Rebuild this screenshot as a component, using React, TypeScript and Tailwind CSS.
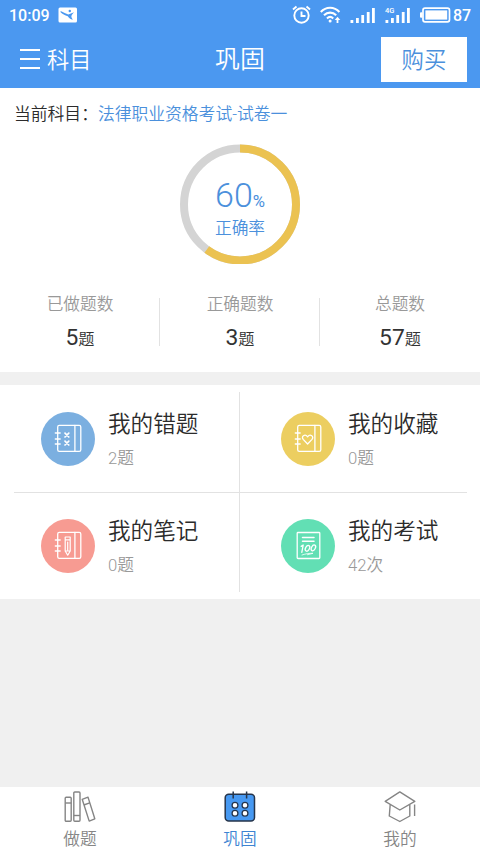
import React from 'react';

interface StatProps {
  label: string;
  value: number;
}

interface EntryProps {
  title: string;
  count: string;
  color: string;
  icon: React.ReactNode;
}

interface TabProps {
  label: string;
  active?: boolean;
  icon: React.ReactNode;
}

const SignalIcon: React.FC<{ tag?: string }> = ({ tag }) => (
  <svg className="w-[26px] h-[18px]" viewBox="0 0 26 18" fill="#fff">
    <rect x="0.5" y="14" width="2.8" height="3" />
    <rect x="6" y="12" width="2.8" height="5" />
    <rect x="11.3" y="9" width="2.8" height="8" />
    <rect x="16.8" y="6" width="2.8" height="11" />
    <rect x="22" y="2" width="2.8" height="15" />
    {tag && (
      <text x="0" y="7" fontSize="7.5" fontWeight="500" fontFamily="Roboto, sans-serif">
        {tag}
      </text>
    )}
  </svg>
);

const StatusBar: React.FC = () => (
  <div className="flex h-[30px] items-center text-white">
    <span className="ml-[9px] w-[41px] pt-px text-[16px] font-medium leading-[30px]">10:09</span>
    <svg className="ml-[8px] w-[20px] h-[16px]" viewBox="0 0 20 16">
      <rect x="0.5" y="0.5" width="18.5" height="15" rx="1.5" fill="#fff" />
      <path d="M2.6 4C5.5 5.4 8 6.8 10.3 7.4L16 5.2C13.6 7.6 13 9.2 13.6 10.6L14.8 12.8C12.4 12.2 11 11.2 9.8 9.2C7 8.4 4.2 6.8 2.6 5.2Z" fill="#4b98f0" />
      <circle cx="11.8" cy="4" r="1.2" fill="#4b98f0" />
    </svg>
    <svg className="ml-[214px] w-[20px] h-[20px]" viewBox="0 0 20 20" fill="none" stroke="#fff" strokeWidth="1.9">
      <circle cx="9.5" cy="10.5" r="7.2" />
      <path d="M9.5 6.5V11H13.5" />
      <path d="M1 4.5L4.5 1.5M14.5 1.5L18 4.5" />
    </svg>
    <svg className="ml-[8px] w-[22px] h-[18px]" viewBox="0 0 22 18" fill="none" stroke="#fff" strokeWidth="2.1">
      <path d="M0.8 6C6 0.3 14.2 0.3 19.4 6" />
      <path d="M4 9.3C7.5 5.7 12.7 5.7 16.2 9.3" />
      <path d="M7 12.5C9 10.5 11.2 10.5 13.2 12.5" />
      <circle cx="10.1" cy="15" r="1.5" fill="#fff" stroke="none" />
      <path d="M17.5 17V13.5" strokeWidth="1.8" />
      <path d="M14.7 14L17.5 10.7L20.3 14Z" fill="#fff" stroke="none" />
    </svg>
    <div className="ml-[8px] flex">
      <SignalIcon />
    </div>
    <div className="ml-[9px] flex">
      <SignalIcon tag="4G" />
    </div>
    <svg className="ml-[9px] w-[31px] h-[16px]" viewBox="0 0 31 16">
      <rect x="3" y="1.2" width="26.5" height="13.6" rx="2" fill="none" stroke="#fff" strokeWidth="1.7" />
      <rect x="5.4" y="3.4" width="21.8" height="9.2" fill="#fff" />
      <rect x="0" y="5.2" width="2.5" height="5.6" rx="1" fill="#fff" />
    </svg>
    <span className="ml-[2px] pt-px text-[16px] font-medium leading-[30px]">87</span>
  </div>
);

const Header: React.FC = () => (
  <header className="h-[88px] bg-[#4b98f0] text-white">
    <StatusBar />
    <div className="grid h-[58px] grid-cols-3 items-center">
      <div className="flex items-center pl-[20px]">
        <div className="mr-[7px] flex w-[20px] flex-col gap-[7px]">
          <span className="h-[2px] bg-white" />
          <span className="h-[2px] bg-white" />
          <span className="h-[2px] bg-white" />
        </div>
        <span className="pt-px text-[22.2px] font-[350] leading-[30px]">科目</span>
      </div>
      <h1 className="pt-[2px] text-center text-[25px] font-[350] leading-[34px]">巩固</h1>
      <div className="flex justify-end pr-[13px]">
        <button className="h-[45px] w-[86px] bg-white pt-[3px] text-[22.4px] font-[350] text-[#4b90dc]">购买</button>
      </div>
    </div>
  </header>
);

const RateRing: React.FC<{ rate: number }> = ({ rate }) => {
  const length = 2 * Math.PI * 56;
  return (
    <div className="relative mx-auto h-[120px] w-[120px] text-[#4b90dc]">
      <svg className="h-full w-full -rotate-90" viewBox="0 0 120 120" fill="none" strokeWidth="8">
        <circle cx="59.6" cy="60" r="56" stroke="#d4d4d4" />
        <circle cx="59.6" cy="60" r="56" stroke="#ebc251" strokeDasharray={`${(length * rate) / 100} ${length}`} />
      </svg>
      <div className="absolute inset-0 flex flex-col items-center">
        <div className="mt-[31px] flex h-[40px] items-baseline leading-[40px]">
          <span className="text-[34px] font-[350]">{rate}</span>
          <span className="text-[16.7px] font-normal">%</span>
        </div>
        <span className="mt-[2px] text-[16.7px] font-[350] leading-[24px]">正确率</span>
      </div>
    </div>
  );
};

const Stat: React.FC<StatProps> = ({ label, value }) => (
  <div className="flex flex-col items-center">
    <span className="pt-[2px] text-[16.7px] font-[350] leading-[24px] text-[#999]">{label}</span>
    <div className="mt-[5px] flex items-baseline leading-[32px] text-[#333]">
      <span className="text-[22.8px]">{value}</span>
      <span className="text-[16.2px] font-[350]">题</span>
    </div>
  </div>
);

const Notebook: React.FC<{ children: React.ReactNode }> = ({ children }) => (
  <svg className="h-[54px] w-[54px]" viewBox="0 0 54 54" fill="none" stroke="#fff" strokeWidth="1.3" strokeLinecap="round" strokeLinejoin="round">
    <rect x="16.7" y="13.3" width="23.1" height="26" rx="1.6" />
    <path d="M33.9 13.5V39.1M14.3 21H19.2M14.3 27H19.2M14.3 32H19.2" />
    {children}
  </svg>
);

const WrongIcon: React.FC = () => (
  <Notebook>
    <path d="M24 21.2L27.8 25M27.8 21.2L24 25M24 29.2L27.8 33M27.8 29.2L24 33" strokeWidth="1.7" />
  </Notebook>
);

const FavoriteIcon: React.FC = () => (
  <Notebook>
    <path d="M26.6 32L22.2 27.4C19.7 24.4 24 21.4 26.6 24.8C29.2 21.4 33.5 24.4 31 27.4Z" />
  </Notebook>
);

const NoteIcon: React.FC = () => (
  <Notebook>
    <path d="M24.2 18H29.2V32L26.7 36.2L24.2 32ZM24.2 20.8H29.2M26.7 23V31M24.2 32H29.2" strokeWidth="1.2" />
  </Notebook>
);

const ExamIcon: React.FC = () => (
  <svg className="h-[54px] w-[54px]" viewBox="0 0 54 54" fill="none" stroke="#fff" strokeWidth="1.3" strokeLinecap="round" strokeLinejoin="round">
    <rect x="16.2" y="13.5" width="22.6" height="26" rx="0.8" />
    <path d="M21.5 18.5H33M21.5 22.3H33" strokeWidth="1.5" />
    <path d="M20.2 27.4L22.2 26L20.8 33.4" />
    <ellipse cx="26.5" cy="29.3" rx="1.9" ry="3.1" transform="rotate(28 26.5 29.3)" />
    <ellipse cx="32.4" cy="28.9" rx="1.9" ry="3.1" transform="rotate(28 32.4 28.9)" />
    <path d="M21 36C25 34.5 29 34.3 32 34.3L26.5 35.7" strokeWidth="0.8" />
  </svg>
);

const Entry: React.FC<EntryProps> = ({ title, count, color, icon }) => (
  <div className="flex h-[107px] items-center">
    <div className={`h-[54px] w-[54px] shrink-0 rounded-full ${color}`}>{icon}</div>
    <div className="ml-[13px] flex flex-col pt-[4px]">
      <span className="text-[22.6px] font-[350] leading-[34px] text-[#2b2b2b]">{title}</span>
      <span className="mt-[3px] text-[16.7px] font-[350] leading-[28px] text-[#999]">{count}</span>
    </div>
  </div>
);

const BooksIcon: React.FC = () => (
  <svg className="h-[34px] w-[34px]" viewBox="0 0 34 34" fill="none" stroke="#858585" strokeWidth="1.4" strokeLinejoin="round">
    <rect x="2.2" y="7.3" width="6" height="24" rx="1" />
    <path d="M2.2 13H8.2" />
    <rect x="10.8" y="2" width="6.2" height="29.3" rx="1" />
    <path d="M10.8 25.5H17" />
    <path d="M19.2 9.3L25 7.1L31.8 28.8L26.2 31.1ZM20.8 15L26.7 12.8" />
  </svg>
);

const CalendarIcon: React.FC = () => (
  <svg className="h-[34px] w-[34px]" viewBox="0 0 34 34" fill="none" stroke="#26354b" strokeWidth="1.5">
    <rect x="2.2" y="4.3" width="29.3" height="26.8" rx="3.5" fill="#4799f2" />
    <path d="M10.2 1.5V8.5M23.6 1.5V8.5" />
    <g fill="#fff" strokeWidth="1.3">
      <circle cx="12" cy="15.3" r="2.9" />
      <circle cx="22" cy="15.3" r="2.9" />
      <circle cx="12" cy="23.3" r="2.9" />
      <circle cx="22" cy="23.3" r="2.9" />
    </g>
  </svg>
);

const GraduateIcon: React.FC = () => (
  <svg className="h-[34px] w-[34px]" viewBox="0 0 34 34" fill="none" stroke="#858585" strokeWidth="1.4" strokeLinejoin="round">
    <path d="M16.8 1.9L31.8 11.3L16.8 20L2.2 11.3Z" />
    <path d="M7.2 14.5L6.3 26L16.8 31.5L26.8 26V14.5M31.6 14.5V26" />
  </svg>
);

const Tab: React.FC<TabProps> = ({ label, active, icon }) => (
  <div className="flex flex-col items-center pt-[3px]">
    {icon}
    <span className={`pt-[4px] text-[16.7px] font-[350] leading-[24px] ${active ? 'text-[#3d84d2]' : 'text-[#858585]'}`}>{label}</span>
  </div>
);

const App: React.FC = () => {
  return (
    <div className="flex h-[853px] w-[480px] flex-col bg-[#f0f0f0] font-['Roboto','Noto_Sans_CJK_SC',sans-serif]">
      <Header />

      <section className="h-[284px] bg-white">
        <p className="pt-[14px] pl-[14px] text-[16.8px] font-[350] leading-[24px] text-[#2b2b2b]">
          当前科目：<span className="text-[#4b90dc]">法律职业资格考试-试卷一</span>
        </p>
        <div className="mt-[18px]">
          <RateRing rate={60} />
        </div>
        <div className="mt-[27px] grid grid-cols-3">
          <Stat label="已做题数" value={5} />
          <div className="relative">
            <span className="absolute top-[7px] -left-px h-[48px] w-px bg-[#e2e2e2]" />
            <Stat label="正确题数" value={3} />
            <span className="absolute top-[7px] right-0 h-[48px] w-px bg-[#e2e2e2]" />
          </div>
          <Stat label="总题数" value={57} />
        </div>
      </section>

      <section className="mt-[13px] flex h-[214px] bg-white">
        <div className="my-[7px] flex w-[240px] flex-col border-r border-[#e2e2e2]">
          <div className="-mt-[7px] ml-[14px] border-b border-[#e2e2e2] pl-[27px]">
            <Entry title="我的错题" count="2题" color="bg-[#7bafe0]" icon={<WrongIcon />} />
          </div>
          <div className="-mt-px pl-[41px]">
            <Entry title="我的笔记" count="0题" color="bg-[#f79b92]" icon={<NoteIcon />} />
          </div>
        </div>
        <div className="flex w-[240px] flex-col">
          <div className="mr-[13px] border-b border-[#e2e2e2] pl-[41px]">
            <Entry title="我的收藏" count="0题" color="bg-[#ecce60]" icon={<FavoriteIcon />} />
          </div>
          <div className="-mt-px pl-[41px]">
            <Entry title="我的考试" count="42次" color="bg-[#62dfb4]" icon={<ExamIcon />} />
          </div>
        </div>
      </section>

      <nav className="mt-auto grid h-[66px] grid-cols-3 bg-white">
        <Tab label="做题" icon={<BooksIcon />} />
        <Tab label="巩固" icon={<CalendarIcon />} active />
        <Tab label="我的" icon={<GraduateIcon />} />
      </nav>
    </div>
  );
};

export default App;
